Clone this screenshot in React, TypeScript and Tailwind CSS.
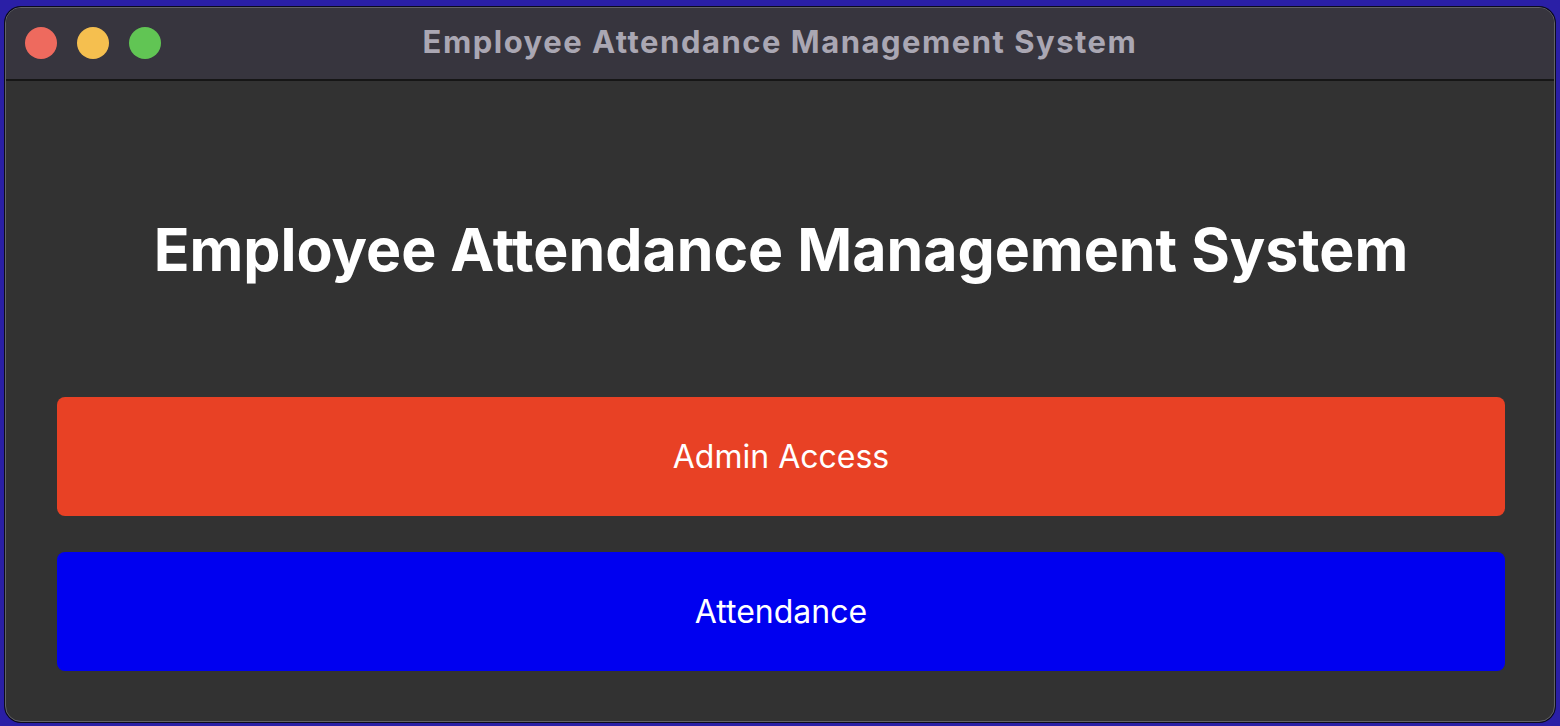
import React from 'react';

const TrafficLights: React.FC = () => (
  <div className="flex items-center gap-[20px] absolute left-[19px] top-[19px]">
    <span className="w-[32px] h-[32px] rounded-full bg-[#ee6a5e]" />
    <span className="w-[32px] h-[32px] rounded-full bg-[#f5bf4f]" />
    <span className="w-[32px] h-[32px] rounded-full bg-[#61c554]" />
  </div>
);

export default function App() {
  return (
    <div
      className="w-[1560px] h-[726px] bg-[#2a1fa6] pt-[7px] pl-[5px] pr-[5px] pb-[4px] overflow-hidden"
      style={{ fontFamily: 'Inter, "Noto Sans", sans-serif' }}
    >
      <div className="h-full rounded-[16px] bg-[#323232] border border-[#626266] ring-1 ring-[#0b0b1e] overflow-hidden flex flex-col">
        <div className="relative h-[73px] shrink-0 bg-[#37353e] border-b-2 border-[#161616] flex items-center justify-center">
          <TrafficLights />
          <span className="text-[31px] leading-[36px] -mt-[4px] font-bold text-[#aaa7b3] tracking-[1.5px]">
            Employee Attendance Management System
          </span>
        </div>

        <div className="flex-1 flex flex-col pl-[51px] pr-[49px] pt-[133px]">
          <h1 className="text-[59px] leading-[72px] font-bold text-white text-center">
            Employee Attendance Management System
          </h1>

          <div className="mt-[111px] flex flex-col gap-[36px]">
            <button className="h-[119px] w-full rounded-[8px] bg-[#e84125] text-white text-[32px]">
              Admin Access
            </button>
            <button className="h-[119px] w-full rounded-[8px] bg-[#0000f0] text-white text-[32px]">
              Attendance
            </button>
          </div>
        </div>
      </div>
    </div>
  );
}
